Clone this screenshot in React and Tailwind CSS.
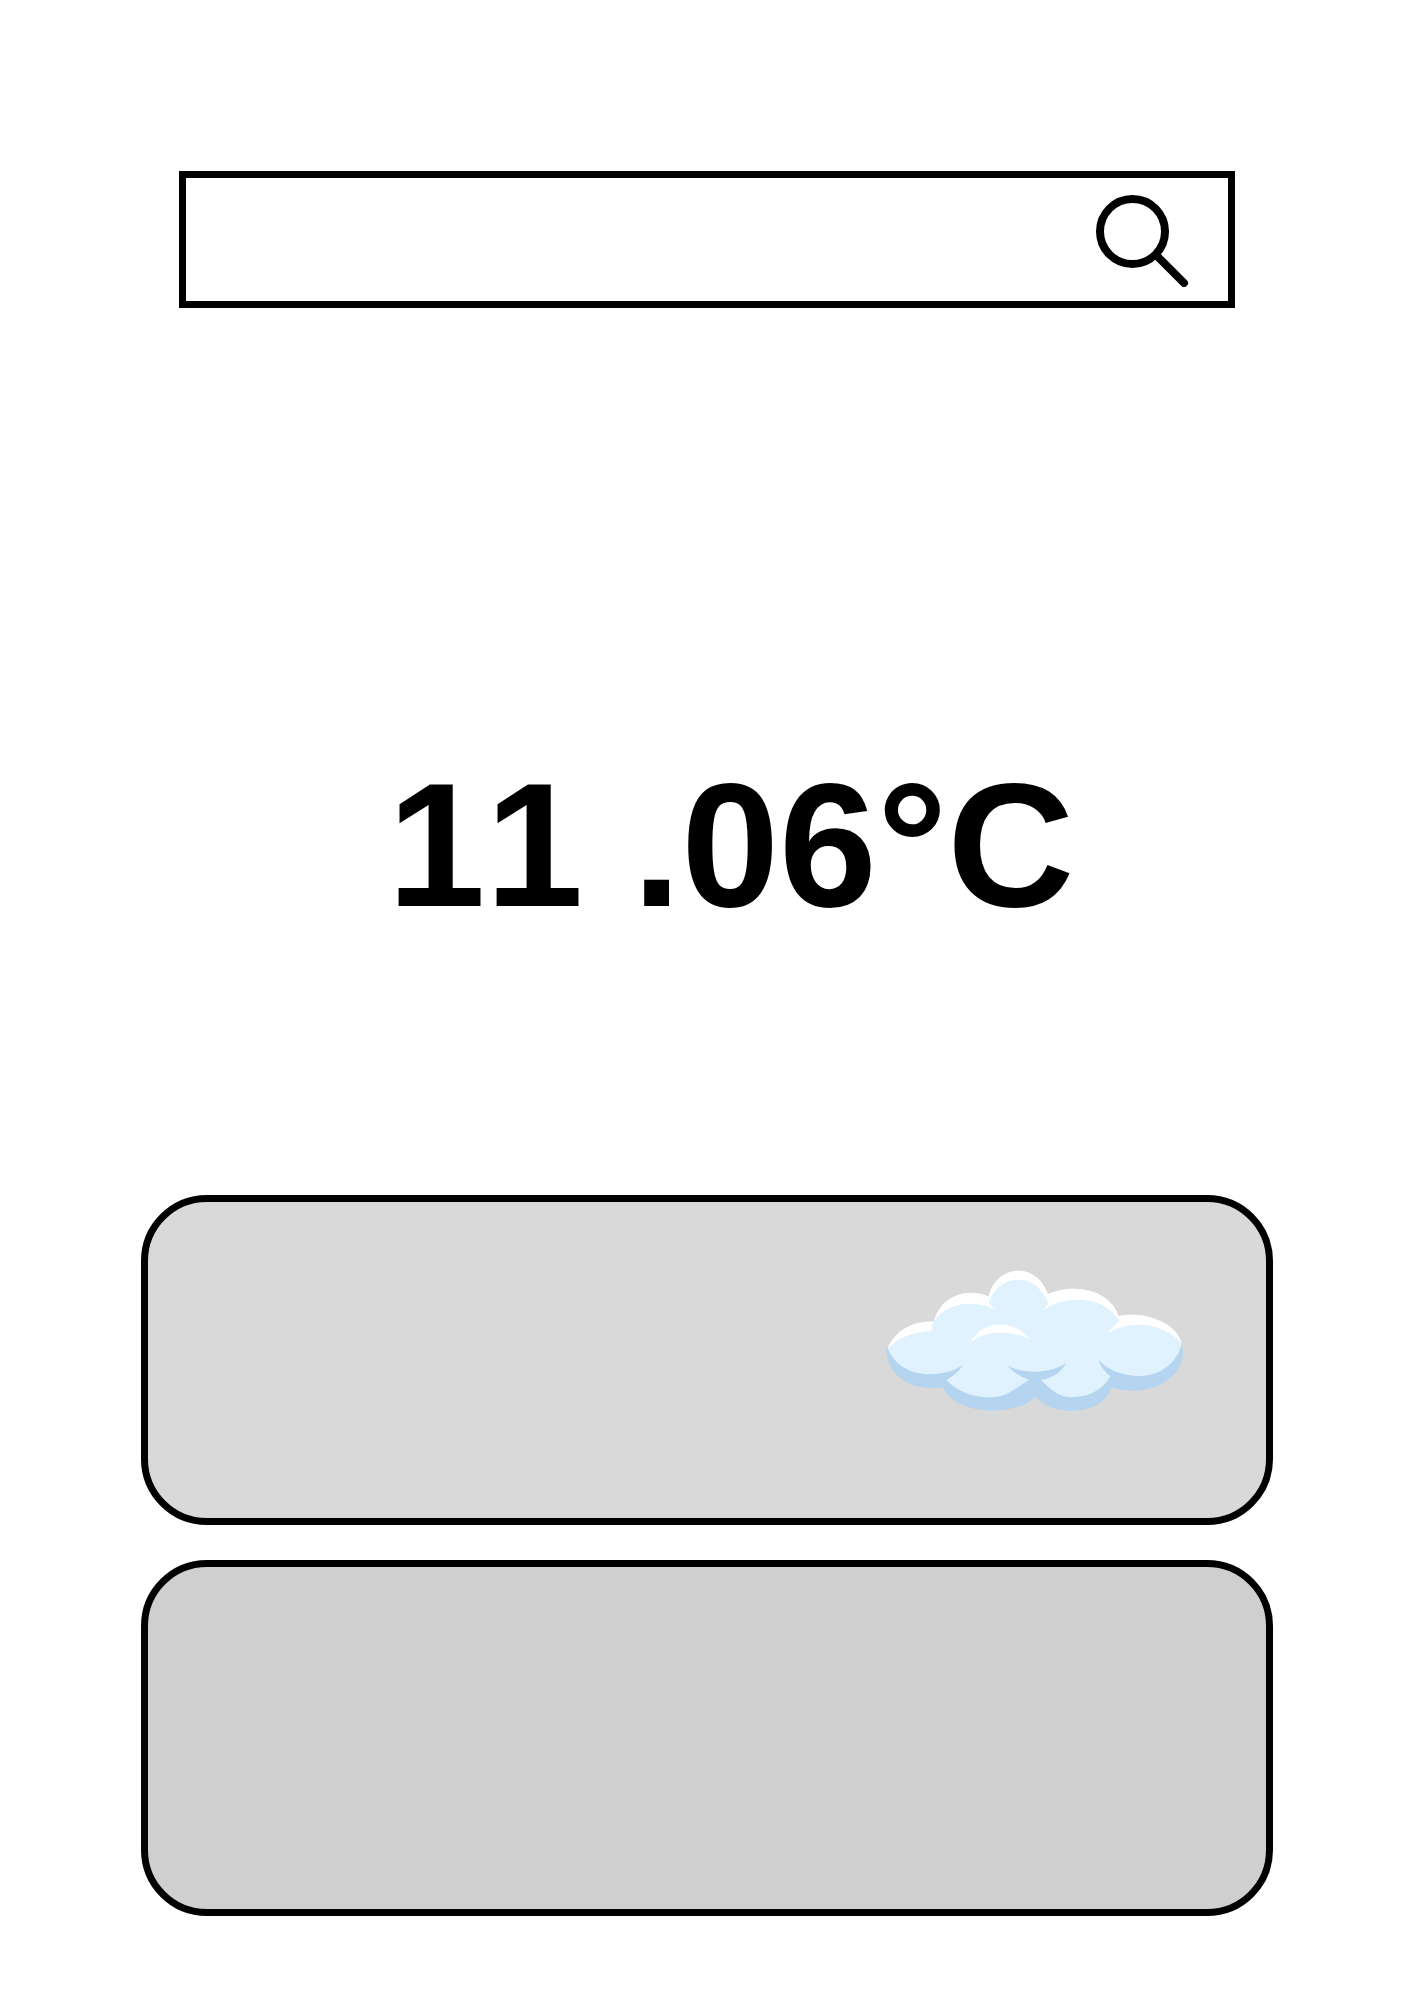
function SearchIcon() {
  return (
    <svg className="size-[95px]" viewBox="0 0 95 95" fill="none" stroke="black" aria-hidden="true">
      <circle cx="38.5" cy="39.5" r="32.5" strokeWidth="8" />
      <path d="M62.5 63.5 L90 91" strokeWidth="8" strokeLinecap="round" />
    </svg>
  );
}

function CloudIcon() {
  return (
    <svg className="w-[297px]" viewBox="48 58 891 423" role="img" aria-label="Cloudy">
      <path
        fill="#b4d4f0"
        d="M53 293 L50 292 C46 360 105 412 185 412 C197 412 208 411 217 409 C240 455 300 480 366 480 C430 480 470 462 497 438 C520 465 555 480 603 480 C665 480 708 455 724 411 C745 417 765 420 788 420 C875 420 943 365 938 300 L935 278 L745 240 L200 240 Z"
      />
      <path
        fill="#e1f2ff"
        d="M53 293 C75 345 120 371 182 371 C220 371 252 360 278 344 C265 364 250 378 229 387 C262 423 305 440 366 440 C410 440 435 413 477 387 C452 380 430 365 413 345 C437 357 462 363 493 363 C530 363 565 352 589 337 C573 364 550 382 513 388 C545 420 570 440 603 440 C660 440 700 415 721 377 C703 362 692 347 685 326 C710 357 755 376 810 376 C870 376 925 335 935 278 C925 230 855 192 788 192 C773 192 758 193 745 196 C733 150 680 114 610 114 C582 114 556 120 534 131 C520 90 487 60 446 60 C403 60 367 90 356 138 C340 130 322 126 303 126 C250 126 205 160 193 213 C130 210 75 240 53 293 Z"
      />
      <g fill="white">
        <path d="M53 293 C75 240 130 210 193 213 C188 222 185 232 183 242 C130 242 85 262 53 293 Z" />
        <path d="M191 213 C205 160 250 126 303 126 C322 126 340 130 357 138 L356 155 C363 165 371 173 381 180 C355 165 330 159 298 159 C250 159 213 180 191 213 Z" />
        <path d="M356 157 L356 138 C367 90 403 60 446 60 C487 60 520 90 534 131 L535 158 C515 110 485 87 446 87 C405 87 372 110 356 157 Z" />
        <path d="M533 131 C556 120 582 114 610 114 C680 114 733 150 745 196 L748 211 C728 175 685 147 625 147 C580 147 545 160 515 182 C523 175 530 166 535 157 Z" />
        <path d="M744 196 C758 193 773 192 788 192 C855 192 925 230 935 278 C905 243 860 222 805 222 C770 222 740 230 713 249 C723 233 735 222 748 211 Z" />
        <path d="M302 274 C320 240 350 222 391 222 C430 222 460 240 480 268 C455 253 425 246 393 246 C358 246 328 255 302 274 Z" />
      </g>
    </svg>
  );
}

export default function App() {
  return (
    <main className="flex min-h-screen flex-col bg-white pt-[171px] pb-[83px] font-['Liberation_Sans',sans-serif] text-black">
      <form
        role="search"
        className="mx-[179px] flex h-[137px] items-center border-7 border-black pr-[39px]"
        onSubmit={(event) => event.preventDefault()}
      >
        <input
          type="search"
          aria-label="Search location"
          className="h-full min-w-0 flex-1 bg-transparent px-8 text-5xl outline-none"
        />
        <button type="submit" aria-label="Search">
          <SearchIcon />
        </button>
      </form>

      <h1 className="mt-[449px] pl-[48px] text-center text-[176px] leading-[176px] font-bold whitespace-nowrap [font-kerning:none]">
        11 .06°C
      </h1>

      <div className="mx-[141px] mt-[262px] flex flex-col gap-[35px]">
        <section className="flex h-[330px] items-start justify-end rounded-[66px] border-7 border-black bg-[#d9d9d9] pt-[68px] pr-[83px]">
          <CloudIcon />
        </section>
        <section className="h-[356px] rounded-[66px] border-7 border-black bg-[#cfcfcf]" />
      </div>
    </main>
  );
}
